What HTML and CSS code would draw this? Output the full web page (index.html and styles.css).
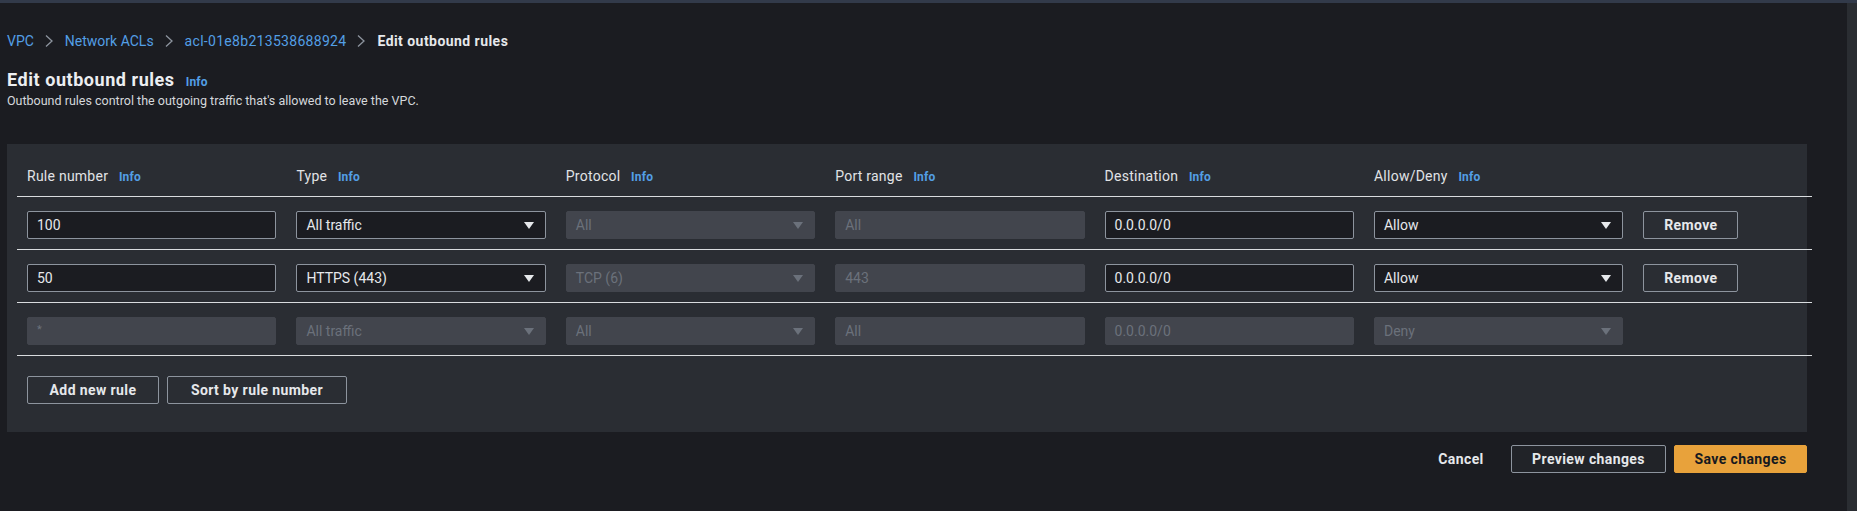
FILE: index.html
```html
<!DOCTYPE html>
<html lang="en">
<head>
<meta charset="utf-8">
<title>Edit outbound rules</title>
<link rel="stylesheet" href="styles.css">
</head>
<body>
<div class="topbar"></div>
<div class="layout">
  <main class="main">
    <nav class="crumbs">
      <a href="#">VPC</a>
      <svg class="sep" width="8" height="12" viewBox="0 0 8 12"><polyline points="1,0.5 7,6 1,11.5" fill="none" stroke="#8d949e" stroke-width="1.3"/></svg>
      <a href="#">Network ACLs</a>
      <svg class="sep" width="8" height="12" viewBox="0 0 8 12"><polyline points="1,0.5 7,6 1,11.5" fill="none" stroke="#8d949e" stroke-width="1.3"/></svg>
      <a href="#" class="acl">acl-01e8b213538688924</a>
      <svg class="sep" width="8" height="12" viewBox="0 0 8 12"><polyline points="1,0.5 7,6 1,11.5" fill="none" stroke="#8d949e" stroke-width="1.3"/></svg>
      <span class="current">Edit outbound rules</span>
    </nav>
    <h1 class="title">Edit outbound rules <a class="info" href="#">Info</a></h1>
    <p class="desc">Outbound rules control the outgoing traffic that's allowed to leave the VPC.</p>

    <section class="panel">
      <div class="row head">
        <div class="label">Rule number <a class="info" href="#">Info</a></div>
        <div class="label">Type <a class="info" href="#">Info</a></div>
        <div class="label">Protocol <a class="info" href="#">Info</a></div>
        <div class="label">Port range <a class="info" href="#">Info</a></div>
        <div class="label">Destination <a class="info" href="#">Info</a></div>
        <div class="label">Allow/Deny <a class="info" href="#">Info</a></div>
        <div></div>
      </div>

      <div class="row">
        <div class="field">100</div>
        <div class="field select">All traffic<svg class="caret" width="10" height="7" viewBox="0 0 10 7"><polygon points="0,0 10,0 5,7"/></svg></div>
        <div class="field select disabled">All<svg class="caret" width="10" height="7" viewBox="0 0 10 7"><polygon points="0,0 10,0 5,7"/></svg></div>
        <div class="field disabled">All</div>
        <div class="field">0.0.0.0/0</div>
        <div class="field select">Allow<svg class="caret" width="10" height="7" viewBox="0 0 10 7"><polygon points="0,0 10,0 5,7"/></svg></div>
        <button class="btn">Remove</button>
      </div>

      <div class="row">
        <div class="field">50</div>
        <div class="field select">HTTPS (443)<svg class="caret" width="10" height="7" viewBox="0 0 10 7"><polygon points="0,0 10,0 5,7"/></svg></div>
        <div class="field select disabled">TCP (6)<svg class="caret" width="10" height="7" viewBox="0 0 10 7"><polygon points="0,0 10,0 5,7"/></svg></div>
        <div class="field disabled">443</div>
        <div class="field">0.0.0.0/0</div>
        <div class="field select">Allow<svg class="caret" width="10" height="7" viewBox="0 0 10 7"><polygon points="0,0 10,0 5,7"/></svg></div>
        <button class="btn">Remove</button>
      </div>

      <div class="row">
        <div class="field disabled star">*</div>
        <div class="field select disabled">All traffic<svg class="caret" width="10" height="7" viewBox="0 0 10 7"><polygon points="0,0 10,0 5,7"/></svg></div>
        <div class="field select disabled">All<svg class="caret" width="10" height="7" viewBox="0 0 10 7"><polygon points="0,0 10,0 5,7"/></svg></div>
        <div class="field disabled">All</div>
        <div class="field disabled">0.0.0.0/0</div>
        <div class="field select disabled">Deny<svg class="caret" width="10" height="7" viewBox="0 0 10 7"><polygon points="0,0 10,0 5,7"/></svg></div>
        <div></div>
      </div>

      <div class="actions">
        <button class="btn btn-add">Add new rule</button>
        <button class="btn btn-sort">Sort by rule number</button>
      </div>
    </section>

    <div class="footer">
      <button class="btn btn-link">Cancel</button>
      <button class="btn btn-preview">Preview changes</button>
      <button class="btn btn-primary">Save changes</button>
    </div>
  </main>
  <div class="scrollbar"></div>
</div>
</body>
</html>
```

FILE: styles.css
```css
html, body {
  margin: 0;
  padding: 0;
}

body {
  background: #1b1c21;
  color: #e1e3e6;
  font-family: Roboto, "Liberation Sans", Arial, sans-serif;
  font-size: 14px;
}

.topbar {
  height: 3px;
  background: #323a4a;
}

.layout {
  display: flex;
  min-height: 508px;
}

.main {
  flex: 1;
  padding: 28px 40px 0 7px;
}

.scrollbar {
  width: 10px;
  background: #2a2d32;
}

.crumbs {
  display: flex;
  align-items: center;
  height: 20px;
  font-size: 14px;
  line-height: 20px;
}

.crumbs a {
  color: #539fe5;
  text-decoration: none;
}

.crumbs .acl {
  letter-spacing: 0.3px;
}

.crumbs .sep {
  margin: 0 12px 0 11px;
  flex: none;
}

.crumbs .current {
  font-weight: 700;
  letter-spacing: 0.45px;
  color: #e6e8eb;
}

.title {
  margin: 17px 0 0;
  height: 24px;
  font-size: 18px;
  line-height: 24px;
  font-weight: 700;
  letter-spacing: 0.55px;
  color: #eceef1;
}

.info {
  color: #539fe5;
  text-decoration: none;
  font-size: 12px;
  line-height: 1;
  font-weight: 700;
  letter-spacing: 0.2px;
}

.title .info {
  margin-left: 6px;
}

.desc {
  margin: 0;
  height: 18px;
  font-size: 12.5px;
  line-height: 18px;
  color: #d5d8dc;
}

.panel {
  margin-top: 34px;
  background: #2a2d33;
  padding-bottom: 28px;
}

.row {
  display: grid;
  grid-template-columns: repeat(6, 249.4px) 95px;
  column-gap: 20px;
  align-items: center;
  margin: 0 -5px 0 10px;
  padding: 14px 0 10px 10px;
  border-bottom: 1px solid #d9dcdf;
}

.row.head {
  padding: 22px 0 10px 10px;
}

.label {
  height: 20px;
  line-height: 20px;
  letter-spacing: 0.25px;
  color: #e1e3e6;
}

.label .info {
  margin-left: 7px;
}

.field {
  box-sizing: border-box;
  height: 28px;
  display: flex;
  align-items: center;
  justify-content: space-between;
  padding: 0 11px 0 9px;
  background: #1b1c21;
  border: 1px solid #8d949e;
  border-radius: 2px;
  color: #e6e8eb;
  font-size: 14px;
  white-space: nowrap;
}

.field .caret {
  fill: #e6e8eb;
  flex: none;
}

.field.disabled {
  background: #42454d;
  border-color: #42454d;
  color: #6b717b;
}

.field.disabled .caret {
  fill: #6b717b;
}

.field.star {
  align-items: flex-start;
  padding-top: 5px;
  font-size: 11px;
}

.btn {
  box-sizing: border-box;
  height: 28px;
  padding: 0;
  background: transparent;
  border: 1px solid #8d949e;
  border-radius: 2px;
  color: #e6e8eb;
  font-family: Roboto, "Liberation Sans", Arial, sans-serif;
  font-size: 14px;
  font-weight: 700;
  letter-spacing: 0.4px;
  text-align: center;
  cursor: pointer;
}

.row .btn {
  width: 95px;
}

.actions {
  display: flex;
  gap: 8px;
  padding: 20px 0 0 20px;
}

.btn-add {
  width: 132px;
}

.btn-sort {
  width: 180px;
}

.footer {
  display: flex;
  justify-content: flex-end;
  align-items: center;
  gap: 8px;
  margin-top: 13px;
}

.btn-link {
  width: 84px;
  border-color: transparent;
}

.btn-preview {
  width: 155px;
  background: #212328;
}

.btn-primary {
  width: 133px;
  background: #e8a23b;
  border-color: #e8a23b;
  color: #16191f;
}
```
